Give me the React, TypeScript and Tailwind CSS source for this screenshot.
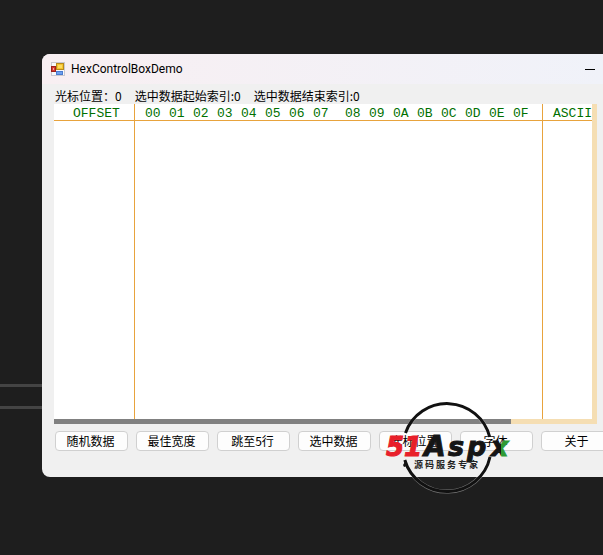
const labels = ['光标位置：0', '选中数据起始索引:0', '选中数据结束索引:0']

const lowBytes = ['01', '02', '03', '04', '05', '06', '07']
const highBytes = ['09', '0A', '0B', '0C', '0D', '0E']

const actions = ['随机数据', '最佳宽度', '跳至5行', '选中数据', '光标位置', '字体', '关于']

function FormIcon() {
  return (
    <svg width="14" height="14" viewBox="0 0 14 14" aria-hidden="true">
      <rect x="0.5" y="0.5" width="13" height="13" fill="#f8f8fa" stroke="#c9c9cf" />
      <rect x="5.5" y="1.5" width="7" height="6" fill="#f6c52c" stroke="#b88a1c" />
      <rect x="7" y="3" width="4" height="3" fill="#fbdc62" />
      <rect x="0.5" y="4.5" width="4" height="5" fill="#d8382f" stroke="#9c221c" />
      <rect x="2" y="6" width="1" height="2" fill="#f3a29c" />
      <rect x="5.5" y="9.5" width="6" height="3" fill="#6ca0ee" stroke="#4a7bd0" />
    </svg>
  )
}

function TitleBar() {
  return (
    <header className="flex h-[30px] items-center bg-linear-to-r from-[#f8eff2] to-[#f0f2f9] pl-[9px] pr-2">
      <FormIcon />
      <h1 className="ml-1.5 flex-1 font-['Roboto',sans-serif] text-[12px] leading-4">HexControlBoxDemo</h1>
      <button type="button" aria-label="Minimize" className="flex h-4 w-2.5 items-center">
        <span className="h-px w-full bg-black" />
      </button>
    </header>
  )
}

function HexView() {
  return (
    <div className="flex bg-[#f5deb3]">
      <div className="min-w-0 flex-1">
        <div className="overflow-hidden bg-white">
          <table className="h-[315px] w-full table-fixed border-separate border-spacing-0 text-left font-['Liberation_Mono',monospace] text-[13px] leading-[13px] text-[#007000]">
            <thead>
              <tr className="h-[17px] *:border-b *:border-[#e8a33d] *:p-0 *:pt-[3px] *:font-normal">
                <th className="w-[81px] border-r"><span className="pl-[19px]">OFFSET</span></th>
                <th className="w-[34px]"><span className="pl-2.5">00</span></th>
                {lowBytes.map(b => <th key={b} className="w-6">{b}</th>)}
                <th className="w-8"><span className="pl-2">08</span></th>
                {highBytes.map(b => <th key={b} className="w-6">{b}</th>)}
                <th className="w-[30px] border-r">0F</th>
                <th><span className="pl-2.5">ASCII</span></th>
              </tr>
            </thead>
            <tbody>
              <tr className="*:border-[#e8a33d] *:p-0">
                <td className="border-r" />
                <td colSpan={16} className="border-r" />
                <td />
              </tr>
            </tbody>
          </table>
        </div>
        <div className="h-[5px]">
          <div className="h-full w-[85%] bg-[#808080]" />
        </div>
      </div>
      <div className="w-[5px]" />
    </div>
  )
}

function Watermark() {
  return (
    <div className="pointer-events-none absolute left-[384px] top-[400px] w-32">
      <svg width="128" height="96" viewBox="0 0 128 96">
        <g fill="none">
          <path d="M21.5 33A44 44 0 0 1 105.7 37" stroke="#fff" strokeWidth="4" opacity="0.3" />
          <path d="M20.8 60A44 44 0 0 0 106 57" stroke="#fff" strokeWidth="4" opacity="0.4" />
          <path d="M21.5 33A44 44 0 0 1 105.7 37" stroke="#111" strokeWidth="3" />
          <path d="M20.8 60A44 44 0 0 0 106 57" stroke="#111" strokeWidth="3" />
          <path d="M22 60l-3 5 1 2 3-1z" fill="#151515" />
        </g>
        <defs>
          <linearGradient id="cross">
            <stop offset="0.55" stopColor="#151515" />
            <stop offset="0.55" stopColor="#2e9a35" />
          </linearGradient>
        </defs>
        <g fontFamily="'DejaVu Sans', sans-serif" fontWeight="700" fontStyle="italic" fontSize="27" fill="#151515">
          <text x="2" y="56" fontSize="26" fill="#e8202a" stroke="#e8202a" strokeWidth="1">51</text>
          <text x="40" y="56" fontSize="28" stroke="#151515" strokeWidth="1">A</text>
          <text x="64" y="56" stroke="#151515" strokeWidth="1">s</text>
          <text x="83" y="56" stroke="#151515" strokeWidth="1">p</text>
          <text x="107" y="56" fill="url(#cross)" stroke="url(#cross)" strokeWidth="1">x</text>
        </g>
      </svg>
      <div className="absolute left-[30px] top-[59px] flex gap-0.5 font-['Noto_Sans_CJK_SC',sans-serif] text-[9px] font-bold leading-3 text-[#222]">
        {[...'源码服务专家'].map(c => <span key={c}>{c}</span>)}
      </div>
    </div>
  )
}

export default function App() {
  return (
    <div className="relative flex min-h-screen overflow-hidden bg-[#1e1e1e] text-black">
      <div className="w-[42px] shrink-0 space-y-[19px] pt-[384px]">
        <div className="h-[3px] bg-[#444]" />
        <div className="h-[3px] bg-[#444]" />
      </div>
      <main className="mt-[54px] min-w-0 flex-1 self-start overflow-hidden rounded-l-lg bg-[#f0f0f0] pb-[26px] font-['Noto_Sans_CJK_SC',sans-serif] text-[12px]">
        <TitleBar />
        <div className="pl-3 pr-1.5">
          <div className="flex h-5 items-end gap-[13px] whitespace-nowrap pl-px leading-4">
            {labels.map(l => <span key={l}>{l}</span>)}
          </div>
          <HexView />
        </div>
        <div className="mt-[7px] flex gap-2 pl-[13px]">
          {actions.map(a => (
            <button key={a} type="button" className="h-5 w-[73px] shrink-0 rounded border border-[#d0d0d0] bg-[#fdfdfd] pr-0.5 leading-4">
              {a}
            </button>
          ))}
        </div>
      </main>
      <Watermark />
    </div>
  )
}
